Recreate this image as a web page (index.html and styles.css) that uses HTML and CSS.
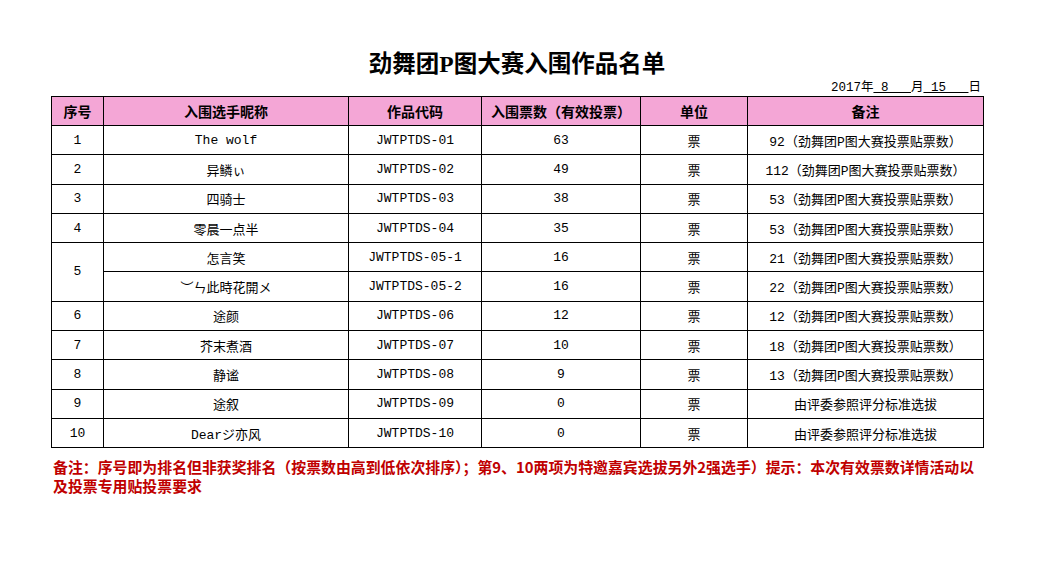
FILE: index.html
```html
<!DOCTYPE html>
<html lang="zh">
<head>
<meta charset="utf-8">
<title>劲舞团P图大赛入围作品名单</title>
<link rel="stylesheet" href="styles.css">
</head>
<body>
<div class="sheet">
  <h1 class="title">劲舞团P图大赛入围作品名单</h1>
  <div class="date">2017年<span class="u">&nbsp;8&nbsp;&nbsp;&nbsp;</span>月<span class="u">&nbsp;15&nbsp;&nbsp;&nbsp;</span>日</div>
  <table class="list">
    <colgroup>
      <col class="c1"><col class="c2"><col class="c3"><col class="c4"><col class="c5"><col class="c6">
    </colgroup>
    <thead>
      <tr><th>序号</th><th>入围选手昵称</th><th>作品代码</th><th>入围票数（有效投票）</th><th>单位</th><th>备注</th></tr>
    </thead>
    <tbody>
      <tr><td>1</td><td>The wolf</td><td>JWTPTDS-01</td><td>63</td><td>票</td><td>92（劲舞团P图大赛投票贴票数）</td></tr>
      <tr><td>2</td><td>异鳞ぃ</td><td>JWTPTDS-02</td><td>49</td><td>票</td><td>112（劲舞团P图大赛投票贴票数）</td></tr>
      <tr><td>3</td><td>四骑士</td><td>JWTPTDS-03</td><td>38</td><td>票</td><td>53（劲舞团P图大赛投票贴票数）</td></tr>
      <tr><td>4</td><td>零晨一点半</td><td>JWTPTDS-04</td><td>35</td><td>票</td><td>53（劲舞团P图大赛投票贴票数）</td></tr>
      <tr><td rowspan="2">5</td><td>怎言笑</td><td>JWTPTDS-05-1</td><td>16</td><td>票</td><td>21（劲舞团P图大赛投票贴票数）</td></tr>
      <tr><td>︶ㄣ此時花開メ</td><td>JWTPTDS-05-2</td><td>16</td><td>票</td><td>22（劲舞团P图大赛投票贴票数）</td></tr>
      <tr><td>6</td><td>途颜</td><td>JWTPTDS-06</td><td>12</td><td>票</td><td>12（劲舞团P图大赛投票贴票数）</td></tr>
      <tr><td>7</td><td>芥末煮酒</td><td>JWTPTDS-07</td><td>10</td><td>票</td><td>18（劲舞团P图大赛投票贴票数）</td></tr>
      <tr><td>8</td><td>静谧</td><td>JWTPTDS-08</td><td>9</td><td>票</td><td>13（劲舞团P图大赛投票贴票数）</td></tr>
      <tr><td>9</td><td>途叙</td><td>JWTPTDS-09</td><td>0</td><td>票</td><td>由评委参照评分标准选拔</td></tr>
      <tr><td>10</td><td>Dearジ亦风</td><td>JWTPTDS-10</td><td>0</td><td>票</td><td>由评委参照评分标准选拔</td></tr>
    </tbody>
  </table>
  <div class="note">
    <div class="note-line">备注：序号即为排名但非获奖排名（按票数由高到低依次排序）；第9、10两项为特邀嘉宾选拔另外2强选手）提示：本次有效票数详情活动以</div>
    <div class="note-line">及投票专用贴投票要求</div>
  </div>
</div>
</body>
</html>
```

FILE: styles.css
```css
html, body {
  margin: 0;
  padding: 0;
  background: #ffffff;
}

.sheet {
  width: 932px;
  padding: 48px 0 0 51px;
  font-family: "Liberation Mono", "Noto Sans CJK SC", monospace;
  color: #000000;
}

.title {
  margin: 0;
  height: 32px;
  line-height: 32px;
  text-align: center;
  font-family: "Liberation Serif", "Noto Sans CJK SC", serif;
  font-weight: bold;
  font-size: 23.5px;
}

.date {
  height: 16px;
  line-height: 16px;
  text-align: right;
  font-size: 12.5px;
  padding-right: 2px;
}

.date .u {
  text-decoration: underline;
}

.list {
  width: 932px;
  border-collapse: collapse;
  table-layout: fixed;
  font-size: 13px;
}

.c1 { width: 52px; }
.c2 { width: 245px; }
.c3 { width: 133px; }
.c4 { width: 159px; }
.c5 { width: 107px; }
.c6 { width: 236px; }

.list th,
.list td {
  border: 1px solid #000000;
  padding: 0;
  text-align: center;
  vertical-align: middle;
  white-space: nowrap;
}

.list th {
  height: 28px;
  background: #f4a6d6;
  font-family: "Noto Sans CJK SC", sans-serif;
  font-weight: bold;
  font-size: 14px;
}

.list td {
  height: 28.3px;
}

.note {
  margin: 9px 0 0 2px;
  color: #c00000;
  font-family: "Noto Sans CJK SC", sans-serif;
  font-weight: bold;
  font-size: 14.9px;
  white-space: nowrap;
}

.note-line {
  height: 19px;
  line-height: 19px;
}
```
